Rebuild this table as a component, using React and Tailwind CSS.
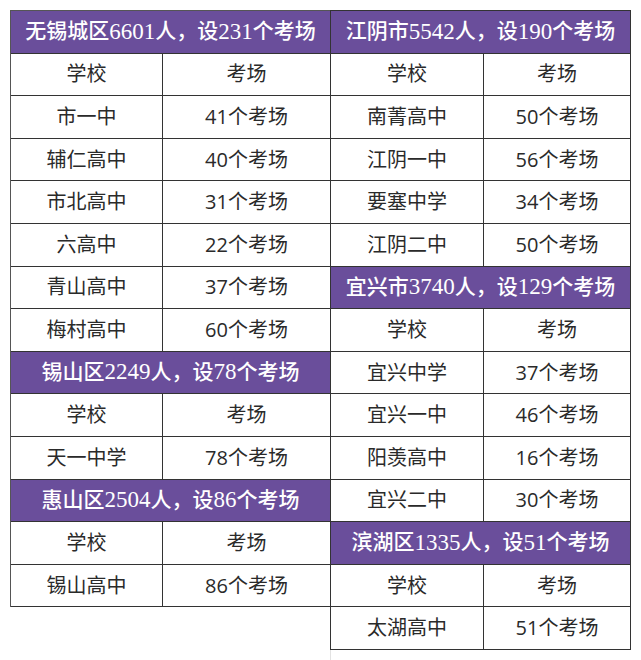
import React from "react";

const left = [
  { title: "无锡城区6601人，设231个考场", rows: [["市一中", "41"], ["辅仁高中", "40"], ["市北高中", "31"], ["六高中", "22"], ["青山高中", "37"], ["梅村高中", "60"]] },
  { title: "锡山区2249人，设78个考场", rows: [["天一中学", "78"]] },
  { title: "惠山区2504人，设86个考场", rows: [["锡山高中", "86"]] },
];

const right = [
  { title: "江阴市5542人，设190个考场", rows: [["南菁高中", "50"], ["江阴一中", "56"], ["要塞中学", "34"], ["江阴二中", "50"]] },
  { title: "宜兴市3740人，设129个考场", rows: [["宜兴中学", "37"], ["宜兴一中", "46"], ["阳羡高中", "16"], ["宜兴二中", "30"]] },
  { title: "滨湖区1335人，设51个考场", rows: [["太湖高中", "51"]] },
];

const headFont = { fontFamily: '"Liberation Serif", "Noto Sans CJK SC", serif' };
const bodyFont = { fontFamily: '"Open Sans", "Noto Sans CJK SC", sans-serif' };

// digits in the header are set a little larger, like the original serif face
function Title({ text }) {
  return text.split(/(\d+)/).map((part, i) =>
    /^\d+$/.test(part) ? (
      <span key={i} className="text-[23px] font-normal">{part}</span>
    ) : (
      <span key={i}>{part}</span>
    )
  );
}

function Section({ section, firstW }) {
  return (
    <>
      <div
        className="h-[42.6px] bg-[#6a4e9b] border-b border-[#333] flex items-center justify-center text-white text-[21px] font-medium"
        style={headFont}
      >
        <Title text={section.title} />
      </div>
      {[["学校", null], ...section.rows].map(([school, n], i) => (
        <div key={i} className="h-[42.6px] flex border-b border-[#333] text-[20px] text-[#2a2a2a]" style={bodyFont}>
          <div className={`${firstW} border-r border-[#333] flex items-center justify-center`}>{school}</div>
          <div className="flex-1 flex items-center justify-center">{n ? `${n}个考场` : "考场"}</div>
        </div>
      ))}
    </>
  );
}

export default function App() {
  return (
    <div className="w-[641px] h-[660px] bg-white pt-[10px] pl-[10px] flex overflow-hidden">
      <div className="w-[320px] self-start border-l border-t border-[#555]">
        {left.map((s, i) => (
          <Section key={i} section={s} firstW="w-[152px]" />
        ))}
      </div>
      <div className="w-[301px] flex flex-col">
        <div className="border-l border-t border-r border-[#333]">
          {right.map((s, i) => (
            <Section key={i} section={s} firstW="w-[153px]" />
          ))}
        </div>
        <div className="flex-1 border-l border-[#e2e2e2]" />
      </div>
    </div>
  );
}
